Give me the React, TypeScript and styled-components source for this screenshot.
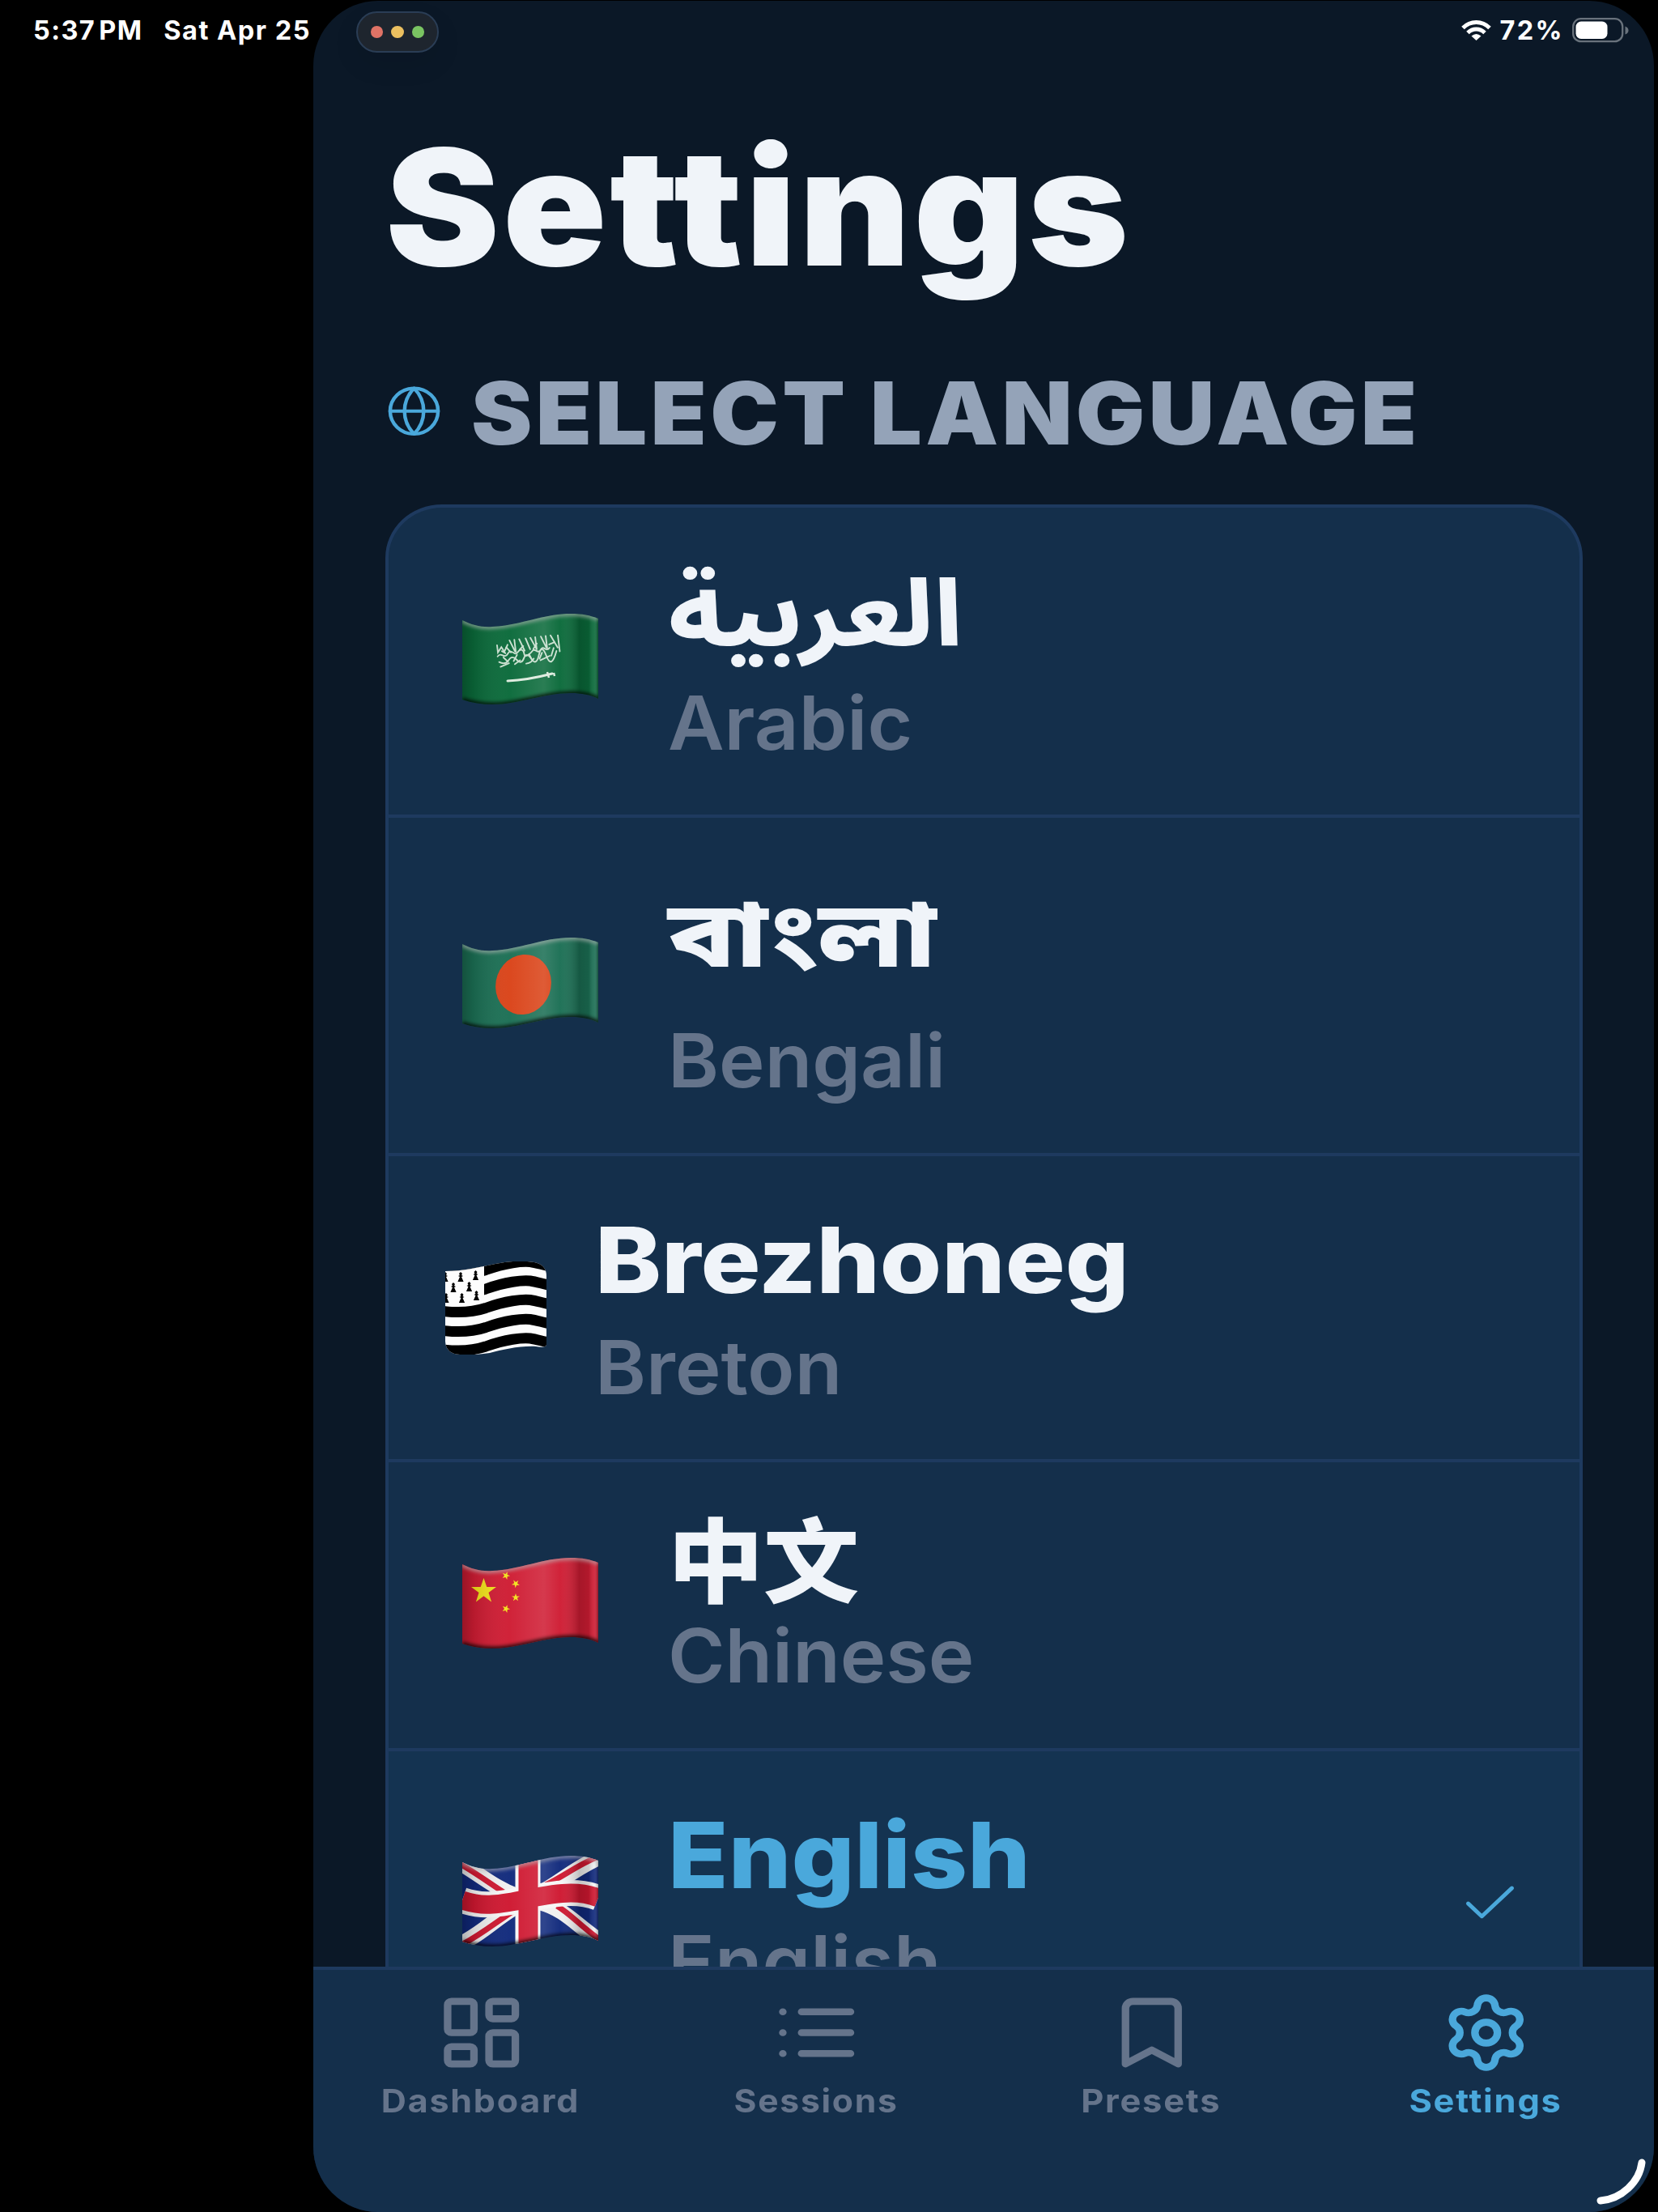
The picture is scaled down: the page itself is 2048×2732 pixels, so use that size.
import React from "react";
import styled, { createGlobalStyle } from "styled-components";
import { Settings } from "lucide-react";

const GlobalStyle = createGlobalStyle`
  * {
    box-sizing: border-box;
  }

  body {
    margin: 0;
    background: #000;
    font-family: Inter, "Noto Sans Arabic", "Noto Sans Bengali",
      "Noto Sans CJK SC", "DejaVu Sans", sans-serif;
  }
`;

const colors = {
  background: "#0b1827",
  surface: "#142f4b",
  selected: "#143351",
  border: "#1e3a5f",
  text: "#f0f4f9",
  secondary: "#94a3b8",
  muted: "#65748b",
  accent: "#4aa8db",
};

const Screen = styled.div`
  position: relative;
  width: 2048px;
  height: 2732px;
  padding: 1px 5px 0 387px;
  background: #000;
  overflow: hidden;
`;

const AppWindow = styled.main`
  position: relative;
  display: flex;
  flex-direction: column;
  height: 2731px;
  border-radius: 80px;
  background: ${colors.background};
  overflow: hidden;
`;

const StatusBar = styled.div`
  position: absolute;
  z-index: 2;
  top: 0;
  left: 0;
  right: 0;
  display: flex;
  justify-content: space-between;
  padding: 0 36px 0 41px;
  color: #fff;
  font-size: 32.5px;
  font-weight: 700;
  line-height: 75px;
`;

const StatusGroup = styled.div<{ $gap: number }>`
  display: flex;
  align-items: center;
  height: 75px;
  gap: ${({ $gap }) => $gap}px;
`;

const StatusText = styled.span<{ $spacing: number; $wordSpacing?: number }>`
  letter-spacing: ${({ $spacing }) => $spacing}px;
  word-spacing: ${({ $wordSpacing }) => $wordSpacing ?? 0}px;
  white-space: nowrap;
`;

const WindowControls = styled.div`
  position: absolute;
  z-index: 2;
  top: 14px;
  left: 440px;
  display: flex;
  align-items: center;
  justify-content: center;
  gap: 10px;
  width: 102px;
  height: 51px;
  border: 2px solid #2a3d55;
  border-radius: 26px;
  background: #1e252e;
  box-shadow: 0 14px 34px rgba(0, 0, 0, 0.08);
`;

const ControlDot = styled.i<{ $color: string }>`
  width: 15.6px;
  height: 15px;
  border-radius: 50%;
  background: ${({ $color }) => $color};
`;

const Content = styled.div`
  flex: 1;
  min-height: 0;
  padding: 134px 88px 0 89px;
  overflow: hidden;
`;

const Stretch = styled.span<{ $x: number; $center?: boolean }>`
  display: inline-block;
  transform: scaleX(${({ $x }) => $x});
  transform-origin: ${({ $center }) => ($center ? "center" : "left")};
  white-space: nowrap;
`;

const Title = styled.h1`
  margin: 0 0 71px;
  color: ${colors.text};
  font-size: 200px;
  font-weight: 900;
  letter-spacing: 3.5px;
  line-height: 240px;
`;

const SectionHeader = styled.div`
  display: flex;
  align-items: center;
  gap: 35px;
  height: 128px;
  margin-bottom: 49px;
  color: ${colors.accent};

  svg {
    margin-bottom: 4px;
  }
`;

const SectionTitle = styled.h2`
  margin: 0;
  color: ${colors.secondary};
  font-size: 107px;
  font-weight: 900;
  letter-spacing: 3.9px;
  line-height: 128px;
`;

const LanguageList = styled.div`
  width: 1479px;
  border: 4px solid ${colors.border};
  border-radius: 70px / 66px;
  background: ${colors.surface};
  overflow: hidden;
`;

const LanguageRow = styled.div<{
  $height: number;
  $compact?: boolean;
  $selected?: boolean;
}>`
  display: flex;
  align-items: center;
  gap: ${({ $compact }) => ($compact ? 60 : 86)}px;
  height: ${({ $height }) => $height}px;
  padding: 0 70px 0 ${({ $compact }) => ($compact ? 70 : 91)}px;
  border-bottom: 4px solid ${colors.border};
  background: ${({ $selected }) =>
    $selected ? colors.selected : "transparent"};
  color: ${colors.accent};
`;

const FlagBox = styled.div<{ $compact?: boolean }>`
  flex: none;
  height: ${({ $compact }) => ($compact ? 115 : 118)}px;

  svg {
    display: block;
  }
`;

const LanguageText = styled.div<{ $top: number }>`
  flex: 1;
  align-self: flex-start;
  padding-top: ${({ $top }) => $top}px;
  white-space: nowrap;
`;

const NativeName = styled.div<{ $selected?: boolean }>`
  color: ${({ $selected }) => ($selected ? colors.accent : colors.text)};
  font-size: 113px;
  font-weight: 800;
  line-height: 134px;
`;

const EnglishName = styled.div<{ $gap: number }>`
  margin-top: ${({ $gap }) => $gap}px;
  color: ${colors.muted};
  font-size: 92px;
  font-weight: 560;
  line-height: 116px;
`;

const TabBar = styled.nav`
  display: grid;
  grid-template-columns: repeat(4, 1fr);
  flex: none;
  height: 303px;
  padding: 26px 0 0 1px;
  border-top: 4px solid ${colors.border};
  background: ${colors.surface};
`;

const Tab = styled.button<{ $active?: boolean }>`
  display: flex;
  flex-direction: column;
  align-items: center;
  gap: 8px;
  height: 170px;
  padding: 0;
  border: 0;
  background: none;
  color: ${({ $active }) => ($active ? colors.accent : colors.muted)};
  font: inherit;
`;

const TabLabel = styled.span`
  margin-right: 2px;
  font-size: 39.5px;
  font-weight: 700;
  letter-spacing: 1.6px;
  line-height: 50px;
`;

const ResizeHandle = styled.svg`
  position: absolute;
  z-index: 2;
  right: 15px;
  bottom: 4px;
`;

type IconProps = {
  width: number;
  height: number;
  strokeWidth: number;
  children: React.ReactNode;
};

const Icon: React.FC<IconProps> = ({ children, ...size }) => (
  <svg
    {...size}
    viewBox="0 0 24 24"
    preserveAspectRatio="none"
    fill="none"
    stroke="currentColor"
    strokeLinecap="round"
    strokeLinejoin="round"
  >
    {children}
  </svg>
);

const tabIcon = { width: 111.5, height: 103, strokeWidth: 2 };

const FLAG_SHAPE =
  "M0 8C12 14 24 17 37 16C70 15 100 0 134 0C148 0 158 2 168 6V105C158 100 148 98 134 98C100 98 70 112 37 112C24 112 12 110 0 106Z";

type FlagProps = { id: string; base: string; children: React.ReactNode };

const WavingFlag: React.FC<FlagProps> = ({ id, base, children }) => (
  <svg width="168" height="112" viewBox="0 0 168 112">
    <defs>
      <clipPath id={`${id}-clip`}>
        <path d={FLAG_SHAPE} />
      </clipPath>
      <linearGradient id={`${id}-shade`}>
        <stop offset="0" stopColor="#000" stopOpacity="0.26" />
        <stop offset="0.08" stopColor="#000" stopOpacity="0.12" />
        <stop offset="0.35" stopColor="#fff" stopOpacity="0.03" />
        <stop offset="0.6" stopColor="#fff" stopOpacity="0.13" />
        <stop offset="0.72" stopColor="#fff" stopOpacity="0.03" />
        <stop offset="0.86" stopColor="#000" stopOpacity="0.2" />
        <stop offset="0.93" stopColor="#000" stopOpacity="0.14" />
        <stop offset="0.97" stopColor="#fff" stopOpacity="0.08" />
        <stop offset="1" stopColor="#000" stopOpacity="0.3" />
      </linearGradient>
      <filter id={`${id}-soft`} x="-10%" y="-30%" width="120%" height="160%">
        <feGaussianBlur stdDeviation="2.2" />
      </filter>
    </defs>
    <g clipPath={`url(#${id}-clip)`}>
      <rect width="168" height="112" fill={base} />
      {children}
      <rect width="168" height="112" fill={`url(#${id}-shade)`} />
      <g fill="none" filter={`url(#${id}-soft)`}>
        <path
          d="M0 8C12 14 24 17 37 16C70 15 100 0 134 0C148 0 158 2 168 6"
          stroke="#b8b8b8"
          strokeOpacity="0.6"
          strokeWidth="6"
        />
        <path
          d="M0 107C12 111 24 113 37 113C70 113 100 99 134 99C148 99 158 101 168 106"
          stroke="#000"
          strokeOpacity="0.75"
          strokeWidth="7"
        />
      </g>
    </g>
  </svg>
);

const SaudiFlag = () => (
  <WavingFlag id="sa" base="#0a6a3a">
    <g
      fill="none"
      stroke="#c9e0cf"
      strokeWidth="1.9"
      strokeLinecap="round"
      transform="rotate(-7 83 45)"
    >
      <path d="M44 34v9l5-6 3 6 5-8M60 30l5 14M66 30v15M72 30l5 15M80 30l4 14M86 30l6 15M92 30v15M99 30l5 14M105 30v15M111 30l7 16M120 31v20" />
      <path d="M43 48c5-6 8 5 13-2s8 5 12 0 8-3 8 3 8 0 11-3 6 6 10 0 6 5 11-1M44 55q7 5 12-1t10 1 9-1 9 2 10-4 9 3 13-5M45 61l11-3M63 60l7-4M77 61q7 0 10-5M95 59l12-4M55 38l5 7M88 44l5-6M108 41l7-2M49 42l4 3M71 43l5-4" />
      <path d="M50 50l5 6M67 49l-5 7M82 50l3 8M98 50l-4 7M113 46l-4 9" />
    </g>
    <path
      d="M56 83Q80 82 111 74"
      stroke="#dcebdd"
      strokeWidth="3"
      fill="none"
      strokeLinecap="round"
    />
    <path d="M105 72l2 7M113 73l1 4" stroke="#dcebdd" strokeWidth="2.5" />
  </WavingFlag>
);

const BangladeshFlag = () => (
  <WavingFlag id="bd" base="#1b6f54">
    <ellipse
      cx="75.5"
      cy="58"
      rx="34"
      ry="37.5"
      fill="#da4318"
      transform="rotate(20 75.5 58)"
    />
  </WavingFlag>
);

const STAR =
  "M0-16 3.8-5 15.5-5 6 1.9 9.6 13.4 0 6.3-9.6 13.4-6 1.9-15.5-5-3.8-5Z";

const ChinaFlag = () => (
  <WavingFlag id="cn" base="#cf1c33">
    <g fill="#f2e21b">
      <path d={STAR} transform="translate(26.5 41)" />
      <path d={STAR} transform="translate(54 22) rotate(20) scale(.32)" />
      <path d={STAR} transform="translate(66 32) rotate(40) scale(.32)" />
      <path d={STAR} transform="translate(66 49) scale(.32)" />
      <path d={STAR} transform="translate(54 63) rotate(20) scale(.32)" />
    </g>
  </WavingFlag>
);

const UkFlag = () => (
  <WavingFlag id="gb" base="#10297c">
    <g fill="none">
      <path
        d="M-4 8C20 22 40 40 68 50M172 1C140 14 120 34 94 47M-4 110C25 96 40 78 68 62M172 106C145 90 128 66 97 58"
        stroke="#f0f0f0"
        strokeWidth="19"
      />
      <path
        d="M-3 10C15 20 34 34 51 45M166 2C145 10 124 26 103 36M1 109C25 96 42 82 62 69M117 62C134 72 145 86 169 103"
        stroke="#cf1730"
        strokeWidth="7"
      />
      <path d="M81 0V112" stroke="#f6f6f6" strokeWidth="31" />
      <path
        d="M0 55C12 59 25 61 37 60C70 58 100 46 134 46C148 46 158 48 168 52"
        stroke="#f6f6f6"
        strokeWidth="32"
      />
      <path d="M81.5 0V112" stroke="#cf1730" strokeWidth="24" />
      <path
        d="M0 55C12 59 25 61 37 60C70 58 100 46 134 46C148 46 158 48 168 52"
        stroke="#cf1730"
        strokeWidth="23"
      />
    </g>
  </WavingFlag>
);

const ERMINES = [
  [0, 19],
  [19, 19],
  [37.5, 17],
  [10, 32],
  [29.5, 31],
  [1, 45],
  [20.5, 45],
  [38.5, 42],
];

const BrittanyFlag = () => (
  <svg width="125" height="115" viewBox="0 0 125 115">
    <defs>
      <clipPath id="bzh-clip">
        <path d="M0 12C22 12 43 7 62 3C82-1 97-1 110 1Q125 4 125 18V103Q124 107 112 105C92 104 71 109 55 113Q35 116 18 115Q1 114 0 99Z" />
      </clipPath>
    </defs>
    <g clipPath="url(#bzh-clip)">
      <rect width="125" height="115" fill="#fdfdfd" />
      {[14.5, 38, 61.5, 85.5, 109].map((y) => (
        <path
          key={y}
          d={`M-2 ${y}C15 ${y + 2} 35 ${y + 1} 50 ${y - 4}C75 ${y - 13} 95 ${
            y - 15
          } 105 ${y - 14}C112 ${y - 13} 118 ${y - 11} 127 ${y - 9}`}
          fill="none"
          stroke="#000"
          strokeWidth="13"
        />
      ))}
      <path d="M0 0H48V50C35 55 18 56 0 55Z" fill="#fdfdfd" />
      {ERMINES.map(([x, y]) => (
        <path
          key={`${x}-${y}`}
          d="M0-6l2 2-1 2 2 1-2 1 2.6 6H-3.6L-1 0l-2-1 2-1-1-2Z"
          transform={`translate(${x} ${y})`}
          fill="#000"
        />
      ))}
    </g>
  </svg>
);

type Language = {
  native: string;
  english: string;
  flag: React.ReactNode;
  height: number;
  top: number;
  gap: number;
  nativeStretch: number;
  compact?: boolean;
  selected?: boolean;
};

const languages: Language[] = [
  {
    native: "العربية",
    english: "Arabic",
    flag: <SaudiFlag />,
    height: 383,
    top: 62,
    gap: 12,
    nativeStretch: 1.1,
  },
  {
    native: "বাংলা",
    english: "Bengali",
    flag: <BangladeshFlag />,
    height: 418,
    top: 76,
    gap: 32,
    nativeStretch: 1.225,
  },
  {
    native: "Brezhoneg",
    english: "Breton",
    flag: <BrittanyFlag />,
    height: 378,
    top: 61,
    gap: 8,
    nativeStretch: 1.092,
    compact: true,
  },
  {
    native: "中文",
    english: "Chinese",
    flag: <ChinaFlag />,
    height: 357,
    top: 56,
    gap: -9,
    nativeStretch: 1.045,
  },
  {
    native: "English",
    english: "English",
    flag: <UkFlag />,
    height: 380,
    top: 61,
    gap: 8,
    nativeStretch: 1.083,
    selected: true,
  },
];

const App: React.FC = () => (
  <>
    <GlobalStyle />
    <Screen>
      <StatusBar>
        <StatusGroup $gap={26}>
          <StatusText $spacing={1.4} $wordSpacing={-5}>
            5:37 PM
          </StatusText>
          <StatusText $spacing={1.5}>Sat Apr 25</StatusText>
        </StatusGroup>
        <StatusGroup $gap={10}>
          <svg width="37" height="25" viewBox="0 0 37 25">
            <g fill="none" stroke="#fff" strokeWidth="5">
              <path d="M2 9.5Q9 2.5 18.5 2.5T35 9.5" />
              <path d="M8 15.5Q12.5 11 18.5 11T29 15.5" />
            </g>
            <path d="M12.5 19.5Q18.5 14.5 24.5 19.5L18.5 25Z" fill="#fff" />
          </svg>
          <StatusText $spacing={2.4}>72%</StatusText>
          <svg width="70" height="31" viewBox="0 0 70 31">
            <rect
              x="1.2"
              y="1.2"
              width="61"
              height="28"
              rx="9.5"
              fill="none"
              stroke="#69727c"
              strokeWidth="2.3"
            />
            <rect
              x="4.5"
              y="4.5"
              width="39"
              height="21.5"
              rx="6.5"
              fill="#fff"
            />
            <path
              d="M65.5 10.5Q69.5 12 69.5 15.5T65.5 20.5Z"
              fill="#69727c"
            />
          </svg>
        </StatusGroup>
      </StatusBar>

      <WindowControls>
        <ControlDot $color="#e07366" />
        <ControlDot $color="#ecc060" />
        <ControlDot $color="#7ac462" />
      </WindowControls>

      <AppWindow>
        <Content>
          <Title>
            <Stretch $x={1.06}>Settings</Stretch>
          </Title>
          <SectionHeader>
            <Icon width={71} height={67.5} strokeWidth={1.5}>
              <circle cx="12" cy="12" r="10" />
              <path d="M12 2a14.5 14.5 0 0 0 0 20 14.5 14.5 0 0 0 0-20" />
              <path d="M2 12h20" />
            </Icon>
            <SectionTitle>
              <Stretch $x={1.06}>SELECT LANGUAGE</Stretch>
            </SectionTitle>
          </SectionHeader>

          <LanguageList>
            {languages.map((lang) => (
              <LanguageRow
                key={lang.english}
                $height={lang.height}
                $compact={lang.compact}
                $selected={lang.selected}
              >
                <FlagBox $compact={lang.compact}>{lang.flag}</FlagBox>
                <LanguageText $top={lang.top}>
                  <NativeName $selected={lang.selected}>
                    <Stretch $x={lang.nativeStretch}>{lang.native}</Stretch>
                  </NativeName>
                  <EnglishName $gap={lang.gap}>
                    <Stretch $x={1.04}>{lang.english}</Stretch>
                  </EnglishName>
                </LanguageText>
                {lang.selected && (
                  <Icon width={81} height={76} strokeWidth={1.5}>
                    <path d="M20 6 9 17l-5-5" />
                  </Icon>
                )}
              </LanguageRow>
            ))}
          </LanguageList>
        </Content>

        <TabBar>
          <Tab>
            <Icon {...tabIcon}>
              <rect x="3" y="3" width="7" height="9" rx="1" />
              <rect x="14" y="3" width="7" height="5" rx="1" />
              <rect x="14" y="12" width="7" height="9" rx="1" />
              <rect x="3" y="16" width="7" height="5" rx="1" />
            </Icon>
            <TabLabel>
              <Stretch $x={1.09} $center>
                Dashboard
              </Stretch>
            </TabLabel>
          </Tab>
          <Tab>
            <Icon {...tabIcon}>
              <path d="M8 6h13M8 12h13M8 18h13M3 6h.01M3 12h.01M3 18h.01" />
            </Icon>
            <TabLabel>
              <Stretch $x={1.08} $center>
                Sessions
              </Stretch>
            </TabLabel>
          </Tab>
          <Tab>
            <Icon {...tabIcon}>
              <path d="m19 21-7-4-7 4V5a2 2 0 0 1 2-2h10a2 2 0 0 1 2 2v16z" />
            </Icon>
            <TabLabel>
              <Stretch $x={1.1} $center>
                Presets
              </Stretch>
            </TabLabel>
          </Tab>
          <Tab $active>
            <Settings {...tabIcon} preserveAspectRatio="none" />
            <TabLabel>
              <Stretch $x={1.1} $center>
                Settings
              </Stretch>
            </TabLabel>
          </Tab>
        </TabBar>
      </AppWindow>

      <ResizeHandle width="66" height="62" viewBox="0 0 66 62">
        <path
          d="M61 5C58 29 36 50 10 52"
          fill="none"
          stroke="#fff"
          strokeWidth="9"
          strokeLinecap="round"
        />
      </ResizeHandle>
    </Screen>
  </>
);

export default App;
